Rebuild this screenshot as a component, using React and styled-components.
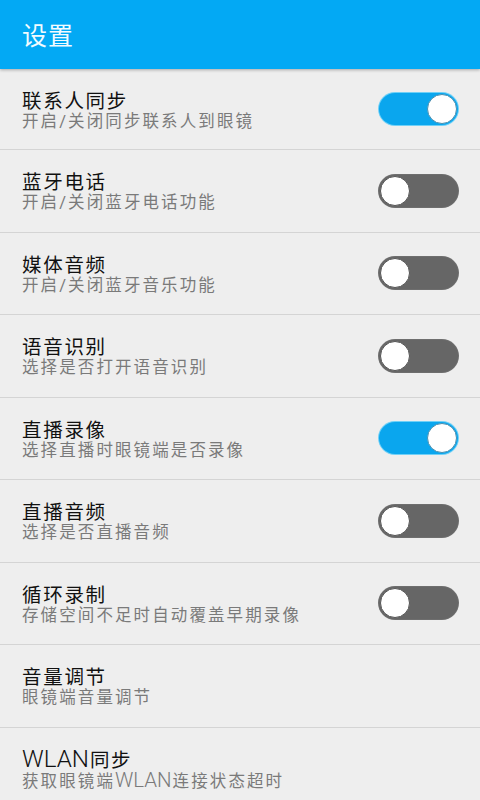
import React, { useState } from "react";
import styled, { createGlobalStyle } from "styled-components";

const Global = createGlobalStyle`
  html, body { margin: 0; padding: 0; background: #eeeeee; }
  body { font-family: "Roboto", "Noto Sans CJK SC", sans-serif; }
`;

const Page = styled.div`
  width: 480px;
  height: 800px;
  overflow: hidden;
  background: #eeeeee;
`;

const Header = styled.header`
  position: relative;
  z-index: 1;
  height: 69px;
  background: #03a9f4;
  display: flex;
  align-items: center;
  padding-left: 22px;
  box-shadow: 0 1px 3px rgba(0, 0, 0, 0.3);
`;

const Title = styled.h1`
  margin: 0 0 2px;
  font-size: 25px;
  letter-spacing: 1px;
  font-weight: 400;
  color: #f2fbff;
  font-family: "Noto Sans CJK SC", sans-serif;
`;

const List = styled.div`
  display: flex;
  flex-direction: column;
`;

const Row = styled.div`
  height: ${(p) => (p.$first ? "80px" : "81.5px")};
  border-bottom: 1px solid #d4d4d4;
  display: flex;
  align-items: center;
  justify-content: space-between;
  padding: 0 22px;
  box-sizing: content-box;
`;

const Texts = styled.div`
  display: flex;
  flex-direction: column;
  padding-top: 4px;
`;

const ItemTitle = styled.div`
  font-family: "Roboto", "Noto Sans CJK SC", sans-serif;
  font-size: 19.5px;
  letter-spacing: 1.7px;
  line-height: 20px;
  color: #111111;
`;

const ItemSub = styled.div`
  font-family: "Roboto", "Noto Sans CJK SC", sans-serif;
  font-size: 16.5px;
  letter-spacing: 2.1px;
  line-height: 19px;
  color: #7a7a7a;
`;

const Latin = styled.span`
  font-size: 1.24em;
  letter-spacing: 0;
  font-weight: 300;
  margin-right: 1px;
`;

const Track = styled.button`
  position: relative;
  width: 79px;
  height: 32px;
  border-radius: 16px;
  border: none;
  padding: 0;
  cursor: pointer;
  background: ${(p) => (p.$on ? "#0aa6ee" : "#666666")};
  box-shadow: ${(p) => (p.$on ? "0 0 0 1px #6fd0f7" : "0 0 0 1px #6e6e6e")};
`;

const Knob = styled.span`
  position: absolute;
  top: 1px;
  left: ${(p) => (p.$on ? "48px" : "1px")};
  width: 30px;
  height: 30px;
  border-radius: 50%;
  background: #ffffff;
  box-sizing: border-box;
  border: 1px solid ${(p) => (p.$on ? "#4a8fb0" : "#555555")};
`;

const items = [
  { t: "联系人同步", s: "开启/关闭同步联系人到眼镜", sw: true, on: true },
  { t: "蓝牙电话", s: "开启/关闭蓝牙电话功能", sw: true, on: false },
  { t: "媒体音频", s: "开启/关闭蓝牙音乐功能", sw: true, on: false },
  { t: "语音识别", s: "选择是否打开语音识别", sw: true, on: false },
  { t: "直播录像", s: "选择直播时眼镜端是否录像", sw: true, on: true },
  { t: "直播音频", s: "选择是否直播音频", sw: true, on: false },
  { t: "循环录制", s: "存储空间不足时自动覆盖早期录像", sw: true, on: false },
  { t: "音量调节", s: "眼镜端音量调节", sw: false },
  { t: "WLAN同步", s: "获取眼镜端WLAN连接状态超时", sw: false },
];

function Mixed({ text }) {
  const parts = text.split(/([A-Za-z]+)/);
  return parts.map((p, i) =>
    /^[A-Za-z]+$/.test(p) ? <Latin key={i}>{p}</Latin> : p
  );
}

function Toggle({ initial }) {
  const [on, setOn] = useState(initial);
  return (
    <Track $on={on} onClick={() => setOn(!on)} aria-pressed={on}>
      <Knob $on={on} />
    </Track>
  );
}

export default function App() {
  return (
    <Page>
      <Global />
      <Header>
        <Title>设置</Title>
      </Header>
      <List>
        {items.map((it, i) => (
          <Row key={it.t} $first={i === 0}>
            <Texts>
              <ItemTitle>
                <Mixed text={it.t} />
              </ItemTitle>
              <ItemSub>
                <Mixed text={it.s} />
              </ItemSub>
            </Texts>
            {it.sw && <Toggle initial={it.on} />}
          </Row>
        ))}
      </List>
    </Page>
  );
}
